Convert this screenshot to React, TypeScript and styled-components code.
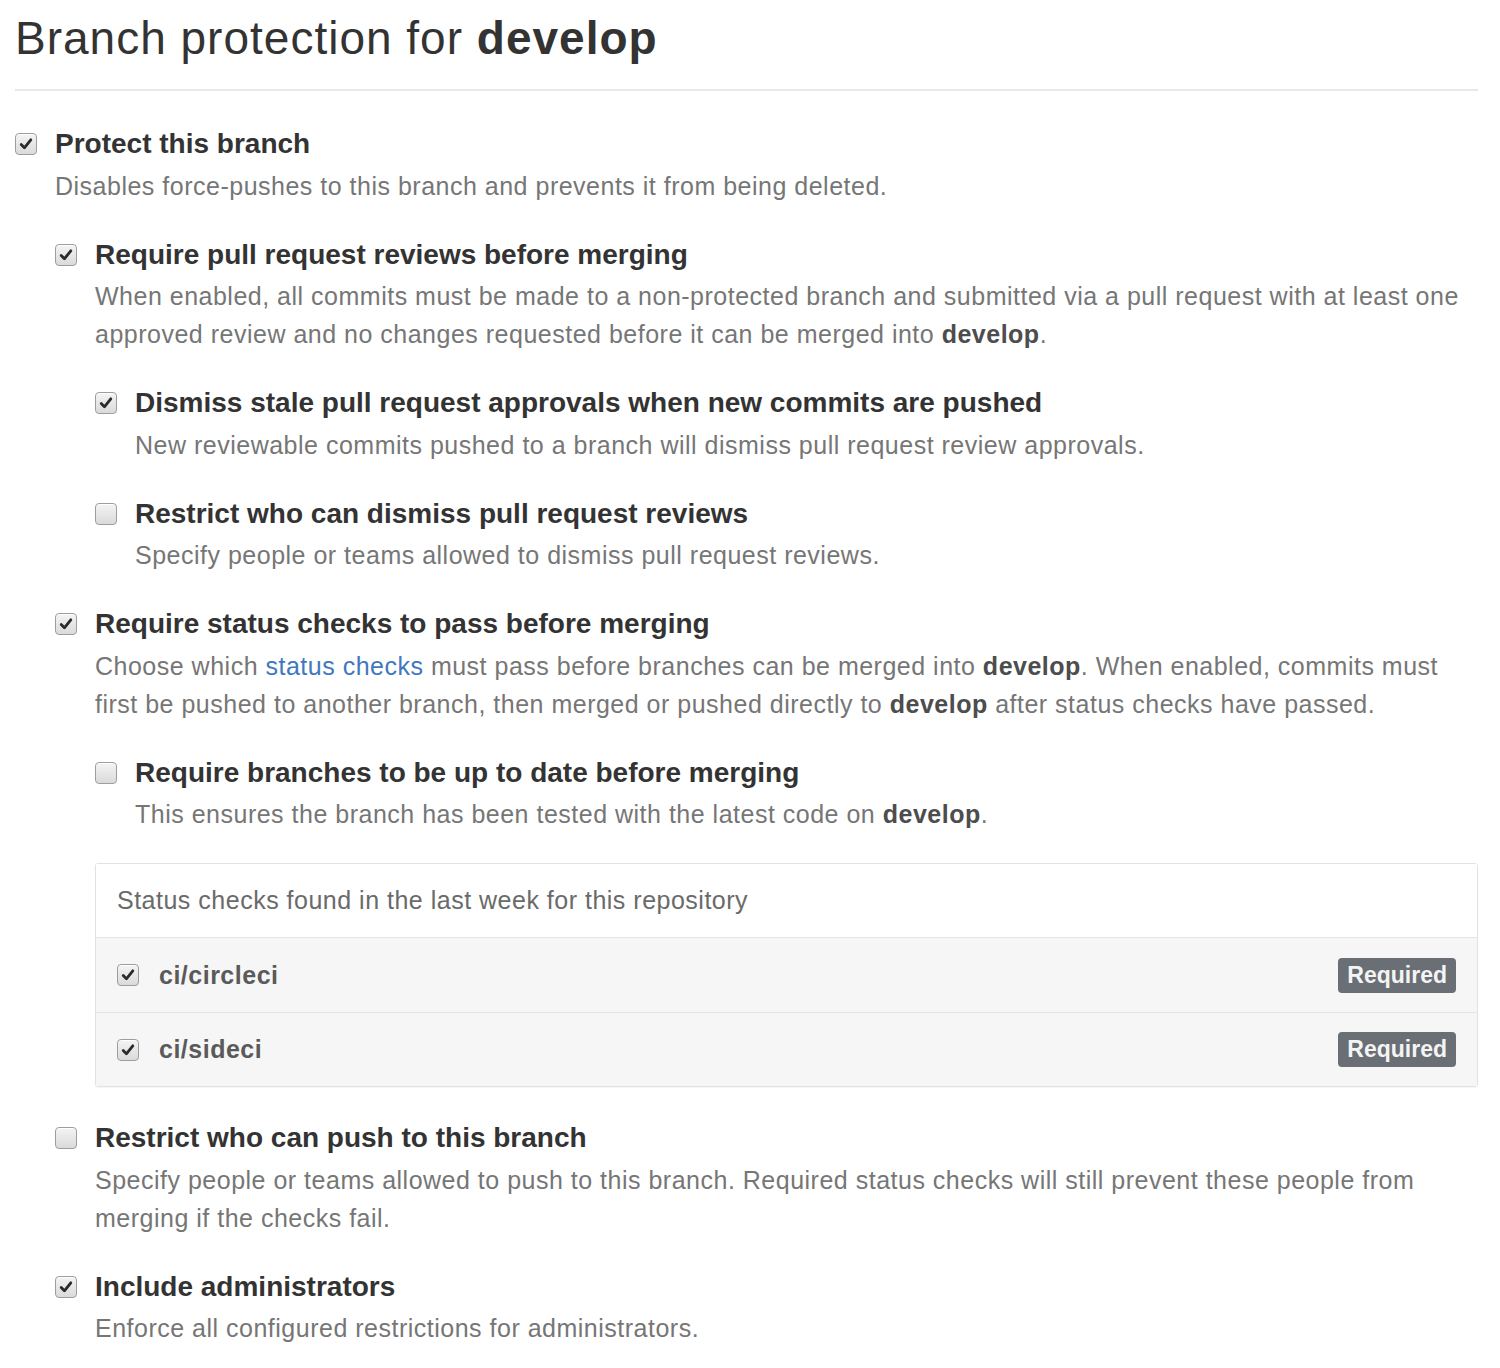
import React from "react";
import styled, { createGlobalStyle } from "styled-components";

const GlobalStyle = createGlobalStyle`
  html, body {
    margin: 0;
    padding: 0;
    background: #fff;
  }
  body {
    font-family: "Liberation Sans", Arial, sans-serif;
    color: #333;
  }
`;

const Page = styled.div`
  width: 1463px;
  padding: 10px 22px 20px 15px;
`;

const Heading = styled.h1`
  margin: 0;
  padding: 0 0 23px 0;
  font-size: 46px;
  line-height: 56px;
  letter-spacing: 1px;
  font-weight: 400;
  color: #333;
  border-bottom: 2px solid #e8e8e8;

  strong {
    font-weight: 700;
  }
`;

const Options = styled.div`
  padding-top: 36px;
`;

const OptionRow = styled.div<{ $gap?: number }>`
  display: flex;
  align-items: flex-start;
  gap: 18px;
  margin-top: ${({ $gap }) => $gap ?? 33}px;

  &:first-child {
    margin-top: 0;
  }
`;

const Box = styled.span`
  flex: 0 0 auto;
  width: 20px;
  height: 20px;
  margin-top: 6px;
  border: 1px solid #9d9d9d;
  border-radius: 4px;
  background: linear-gradient(#f4f4f4, #dadada);
  box-shadow: inset 0 1px 0 #fff;
  display: grid;
  place-items: center;

  svg {
    display: block;
  }
`;

function Checkbox({ checked }: { checked: boolean }) {
  return (
    <Box>
      {checked && (
        <svg width="16" height="16" viewBox="0 0 16 16" aria-hidden="true">
          <path
            d="M3.2 8.6 L6.4 11.8 L12.8 3.8"
            fill="none"
            stroke="#2b2b2b"
            strokeWidth="2.8"
            strokeLinecap="round"
            strokeLinejoin="round"
          />
        </svg>
      )}
    </Box>
  );
}

const Content = styled.div`
  flex: 1 1 auto;
  min-width: 0;
`;

const Title = styled.div`
  font-size: 28px;
  line-height: 34px;
  font-weight: 700;
  color: #333;
`;

const Note = styled.p`
  margin: 5.5px 0 0;
  font-size: 25px;
  line-height: 38px;
  letter-spacing: 0.5px;
  color: #767676;

  strong {
    color: #4d4d4d;
    font-weight: 700;
  }

  a {
    color: #4078c0;
    text-decoration: none;
  }
`;

const ChecksBox = styled.div`
  margin-top: 30px;
  border: 1px solid #e2e2e2;
  border-radius: 3px;
  box-shadow: 0 1px 1px rgba(0, 0, 0, 0.04);
`;

const ChecksHeader = styled.div`
  height: 73px;
  display: flex;
  align-items: center;
  padding: 0 21px;
  font-size: 25px;
  letter-spacing: 0.5px;
  color: #6a6a6a;
  background: #fff;
  border-bottom: 1px solid #e5e5e5;
`;

const CheckItem = styled.div`
  height: 74px;
  display: flex;
  align-items: center;
  gap: 20px;
  padding: 0 21px;
  background: #f6f6f6;

  & + & {
    border-top: 1px solid #e5e5e5;
    height: 73px;
  }

  ${Box} {
    margin-top: 0;
  }
`;

const CheckName = styled.span`
  flex: 1;
  font-size: 25px;
  letter-spacing: 0.5px;
  font-weight: 700;
  color: #5a5a5a;
`;

const Badge = styled.span`
  display: inline-block;
  padding: 0 9px;
  height: 35px;
  line-height: 35px;
  border-radius: 4px;
  background: #6a6e75;
  color: #f4f4f4;
  font-size: 23px;
  font-weight: 700;
`;

type OptionProps = {
  checked: boolean;
  title: string;
  gap?: number;
  note: React.ReactNode;
  nested?: React.ReactNode;
};

function Option({ checked, title, note, nested, gap }: OptionProps) {
  return (
    <OptionRow $gap={gap}>
      <Checkbox checked={checked} />
      <Content>
        <Title>{title}</Title>
        <Note>{note}</Note>
        {nested}
      </Content>
    </OptionRow>
  );
}

const statusChecks = [
  { name: "ci/circleci", checked: true },
  { name: "ci/sideci", checked: true },
];

export default function App() {
  return (
    <>
      <GlobalStyle />
      <Page>
        <Heading>
          Branch protection for <strong>develop</strong>
        </Heading>
        <Options>
          <Option
            checked
            title="Protect this branch"
            note="Disables force-pushes to this branch and prevents it from being deleted."
            nested={
              <>
                <Option
                  checked
                  title="Require pull request reviews before merging"
                  note={
                    <>
                      When enabled, all commits must be made to a non-protected branch and
                      submitted via a pull request with at least one approved review and no
                      changes requested before it can be merged into <strong>develop</strong>.
                    </>
                  }
                  nested={
                    <>
                      <Option
                        checked
                        title="Dismiss stale pull request approvals when new commits are pushed"
                        note="New reviewable commits pushed to a branch will dismiss pull request review approvals."
                      />
                      <Option
                        checked={false}
                        title="Restrict who can dismiss pull request reviews"
                        note="Specify people or teams allowed to dismiss pull request reviews."
                      />
                    </>
                  }
                />
                <Option
                  checked
                  title="Require status checks to pass before merging"
                  note={
                    <>
                      Choose which <a href="#">status checks</a> must pass before branches can
                      be merged into <strong>develop</strong>. When enabled, commits must first
                      be pushed to another branch, then merged or pushed directly to{" "}
                      <strong>develop</strong> after status checks have passed.
                    </>
                  }
                  nested={
                    <>
                      <Option
                        checked={false}
                        title="Require branches to be up to date before merging"
                        note={
                          <>
                            This ensures the branch has been tested with the latest code on{" "}
                            <strong>develop</strong>.
                          </>
                        }
                      />
                      <ChecksBox>
                        <ChecksHeader>
                          Status checks found in the last week for this repository
                        </ChecksHeader>
                        {statusChecks.map((c) => (
                          <CheckItem key={c.name}>
                            <Checkbox checked={c.checked} />
                            <CheckName>{c.name}</CheckName>
                            <Badge>Required</Badge>
                          </CheckItem>
                        ))}
                      </ChecksBox>
                    </>
                  }
                />
                <Option
                  checked={false}
                  gap={34}
                  title="Restrict who can push to this branch"
                  note="Specify people or teams allowed to push to this branch. Required status checks will still prevent these people from merging if the checks fail."
                />
                <Option
                  checked
                  title="Include administrators"
                  note="Enforce all configured restrictions for administrators."
                />
              </>
            }
          />
        </Options>
      </Page>
    </>
  );
}
